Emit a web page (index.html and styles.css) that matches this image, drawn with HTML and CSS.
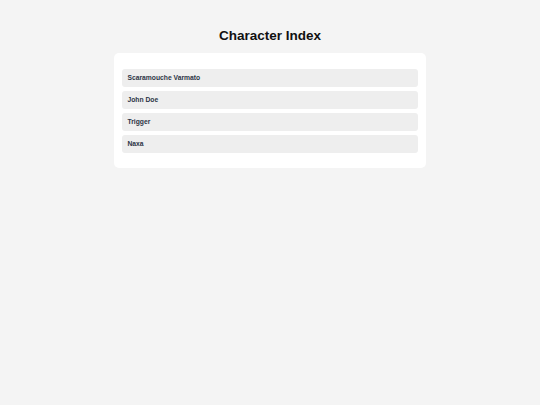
FILE: index.html
```html
<!DOCTYPE html>
<html>
<head>
<meta charset="utf-8">
<link rel="stylesheet" href="styles.css">
</head>
<body>
<h1 class="title">Character Index</h1>
<div class="card">
  <ul class="list">
    <li class="item">Scaramouche Varmato</li>
    <li class="item">John Doe</li>
    <li class="item">Trigger</li>
    <li class="item">Naxa</li>
  </ul>
</div>
</body>
</html>
```
FILE: styles.css
```css
html, body {
  margin: 0;
  padding: 0;
  background: #f4f4f4;
  font-family: "Liberation Sans", Arial, sans-serif;
}
.title {
  margin: 27.6px 0 9.7px;
  font-size: 13.5px;
  line-height: 16px;
  font-weight: bold;
  color: #111;
  text-align: center;
}
.card {
  width: 312px;
  box-sizing: border-box;
  margin: 0 auto;
  background: #fff;
  border-radius: 5px;
  padding: 15.6px 8.4px 15px;
}
.list {
  list-style: none;
  margin: 0;
  padding: 0;
  display: flex;
  flex-direction: column;
  gap: 4.4px;
}
.item {
  background: #eeeeee;
  border-radius: 3px;
  height: 17.7px;
  line-height: 17.7px;
  padding: 0 5px;
  font-size: 6.75px;
  font-weight: bold;
  color: #2c3445;
}
```
